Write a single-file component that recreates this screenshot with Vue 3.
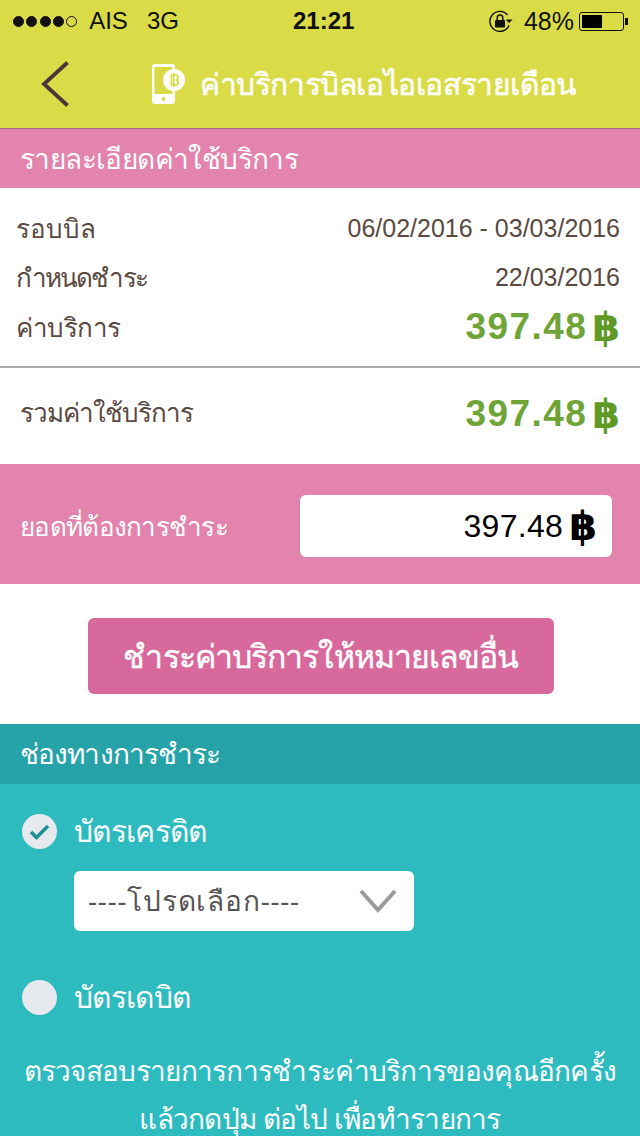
<template>
  <div class="phone">
    <div class="top">
      <div class="status">
        <div class="status-left">
          <span class="dots">
            <i v-for="n in 4" :key="n" class="dot"></i>
            <i class="dot empty"></i>
          </span>
          <span class="carrier">AIS</span>
          <span class="net">3G</span>
        </div>
        <div class="clock">21:21</div>
        <div class="status-right">
          <svg class="lock" width="24" height="22" viewBox="0 0 24 22">
            <path d="M18.6 5A10 10 0 1 0 20 15.5" fill="none" stroke="#111" stroke-width="1.4" />
            <path d="M16.6 9.5h7l-3.5 3.6z" fill="#111" />
            <rect x="6" y="10" width="10" height="7.5" rx="1" fill="#111" />
            <path d="M8.2 10V7.8a2.8 2.8 0 0 1 5.6 0V10" fill="none" stroke="#111" stroke-width="1.5" />
          </svg>
          <span class="pct">48%</span>
          <span class="battery"><i class="level"></i></span>
          <span class="nub"></span>
        </div>
      </div>
      <div class="nav">
        <svg class="back" width="28" height="46" viewBox="0 0 28 46">
          <path d="M26.5 1.5 3 23l23.5 21.5" fill="none" stroke="#4b3636" stroke-width="3.8" />
        </svg>
        <div class="title">
          <svg class="bill-icon" width="33" height="40" viewBox="0 0 33 40">
            <path d="M3 0h17a3 3 0 0 1 3 3v4h-2.4V3H2.4v27h18.2v-4H23v11a3 3 0 0 1-3 3H3a3 3 0 0 1-3-3V3a3 3 0 0 1 3-3z" fill="#fff" />
            <circle cx="11.5" cy="35" r="1.9" fill="#dadc47" />
            <circle cx="22" cy="16" r="11" fill="#fff" />
            <path d="M19.4 11h4.2a2.4 2.4 0 0 1 0 5 2.6 2.6 0 0 1 0 5.200h-4.200zM21.800 9v14" fill="none" stroke="#dadc47" stroke-width="1.7" />
          </svg>
          <span>ค่าบริการบิลเอไอเอสรายเดือน</span>
        </div>
      </div>
    </div>

    <div class="band pink-band">รายละเอียดค่าใช้บริการ</div>

    <div class="details">
      <div class="row row-bill">
        <span>รอบบิล</span>
        <span class="date">06/02/2016 - 03/03/2016</span>
      </div>
      <div class="row row-due">
        <span class="due-label">กำหนดชำระ</span>
        <span class="date">22/03/2016</span>
      </div>
      <div class="row row-fee">
        <span class="fee-label">ค่าบริการ</span>
        <span class="money">397.48 <b class="baht">฿</b></span>
      </div>
    </div>

    <div class="total">
      <span class="total-label">รวมค่าใช้บริการ</span>
      <span class="money">397.48 <b class="baht">฿</b></span>
    </div>

    <div class="amount">
      <span class="amount-label">ยอดที่ต้องการชำระ</span>
      <div class="amount-box">397.48 <b class="baht">฿</b></div>
    </div>

    <div class="action">
      <button class="pay-other">ชำระค่าบริการให้หมายเลขอื่น</button>
    </div>

    <div class="band teal-band">ช่องทางการชำระ</div>

    <div class="channels">
      <div class="option">
        <span class="radio">
          <svg width="21" height="17" viewBox="0 0 21 17">
            <path d="M2 9l5.500 5.500L19 3" fill="none" stroke="#1f9296" stroke-width="3.6" />
          </svg>
        </span>
        <span>บัตรเครดิต</span>
      </div>
      <div class="select">
        <span class="select-text">----โปรดเลือก----</span>
        <svg width="38" height="26" viewBox="0 0 38 26">
          <path d="M2 3l17 19L36 3" fill="none" stroke="#9a9a9a" stroke-width="4" />
        </svg>
      </div>
      <div class="option option-debit">
        <span class="radio"></span>
        <span>บัตรเดบิต</span>
      </div>
      <p class="note">ตรวจสอบรายการการชำระค่าบริการของคุณอีกครั้ง<br />แล้วกดปุ่ม ต่อไป เพื่อทำรายการ</p>
    </div>
  </div>
</template>

<script setup>
</script>

<style>
body {
  margin: 0;
}
</style>

<style scoped>
.phone {
  width: 640px;
  height: 1136px;
  overflow: hidden;
  background: #fff;
  font-family: "Noto Sans", "Liberation Sans", sans-serif;
  color: #5b4a42;
}

.top {
  height: 129px;
  background: #dadc47;
  border-bottom: 1px solid #a5688e;
  box-sizing: border-box;
}

.status {
  height: 40px;
  display: flex;
  align-items: center;
  justify-content: space-between;
  padding: 2px 12px 0 13px;
  box-sizing: border-box;
  position: relative;
  font-family: "Liberation Sans", sans-serif;
  font-size: 24px;
  color: #111;
}

.status-left,
.status-right {
  display: flex;
  align-items: center;
}

.dots {
  display: flex;
  gap: 2.300px;
  margin-right: 12px;
}

.dot {
  width: 11px;
  height: 11px;
  border-radius: 50%;
  background: #111;
  border: 1px solid #111;
  box-sizing: border-box;
}

.dot.empty {
  background: transparent;
}

.net {
  margin-left: 19px;
}

.clock {
  position: absolute;
  left: 293px;
  top: 7px;
  font-weight: 700;
  font-size: 24px;
}

.lock {
  margin-right: 11px;
}

.pct {
  font-size: 25px;
  margin-right: 5px;
}

.battery {
  width: 45px;
  height: 19px;
  border: 1px solid #111;
  border-radius: 3px;
  padding: 2px;
  box-sizing: border-box;
  display: flex;
}

.level {
  width: 20px;
  background: #000;
}

.nub {
  width: 3px;
  height: 7px;
  margin-left: 1px;
  background: #111;
}

.nav {
  height: 88px;
  display: flex;
  align-items: center;
  padding-left: 41px;
  box-sizing: border-box;
}

.back {
  flex: none;
}

.title {
  display: flex;
  align-items: center;
  margin-left: 83px;
  color: #fff;
  font-size: 30px;
  -webkit-text-stroke: 0.5px #fff;
  letter-spacing: -0.4px;
  white-space: nowrap;
}

.bill-icon {
  margin-right: 15px;
}

.band {
  display: flex;
  align-items: center;
  padding-left: 20px;
  color: #fff;
  font-size: 28px;
  box-sizing: border-box;
}

.pink-band {
  background: #e284ad;
  height: 59px;
  letter-spacing: -0.6px;
}

.teal-band {
  background: #26a3a9;
  height: 60px;
  letter-spacing: -0.9px;
}

.details {
  height: 180px;
  padding: 16px 20px 0 16px;
  box-sizing: border-box;
  border-bottom: 2px solid #aaa;
  font-size: 26px;
}

.row {
  display: flex;
  justify-content: space-between;
  align-items: center;
}

.row-bill {
  height: 48px;
}

.row-due {
  height: 50px;
}

.row-fee {
  height: 50px;
}

.due-label {
  letter-spacing: -1.9px;
}

.fee-label {
  letter-spacing: -0.5px;
}

.date {
  font-family: "Liberation Sans", sans-serif;
  font-size: 25px;
}

.money {
  font-family: "Liberation Sans", sans-serif;
  font-weight: 700;
  font-size: 37px;
  letter-spacing: 1.400px;
  color: #6fa436;
  display: flex;
  align-items: center;
  gap: 5px;
}

.baht {
  font-family: "DejaVu Sans", sans-serif;
  color: #5f9a26;
  font-size: 40px;
  line-height: 40px;
  letter-spacing: 0;
}

.total {
  height: 96px;
  padding: 0 20px 4px;
  box-sizing: border-box;
  display: flex;
  justify-content: space-between;
  align-items: center;
  font-size: 26px;
}

.total-label {
  letter-spacing: -1px;
  margin-bottom: 4px;
}

.amount {
  height: 120px;
  background: #e284ad;
  display: flex;
  justify-content: space-between;
  align-items: center;
  padding: 4px 28px 0 20px;
  box-sizing: border-box;
  color: #fff;
  font-size: 26px;
}

.amount-label {
  letter-spacing: -0.7px;
}

.amount-box {
  width: 312px;
  height: 62px;
  background: #fff;
  border-radius: 6px;
  display: flex;
  align-items: center;
  justify-content: flex-end;
  gap: 6px;
  padding-right: 15px;
  box-sizing: border-box;
  font-family: "Liberation Sans", sans-serif;
  font-size: 32px;
  letter-spacing: 0.3px;
  color: #000;
}

.amount-box .baht {
  color: #000;
  font-size: 40px;
}

.action {
  height: 140px;
  display: flex;
  justify-content: center;
  padding: 34px 0 0 2px;
  box-sizing: border-box;
}

.pay-other {
  width: 466px;
  height: 76px;
  border: 0;
  border-radius: 6px;
  background: #d7699c;
  color: #fff;
  font-family: inherit;
  font-size: 32px;
  -webkit-text-stroke: 0.4px #fff;
  letter-spacing: -0.9px;
}

.channels {
  height: 352px;
  background: #2dbbc0;
  padding: 29px 0 0 22px;
  box-sizing: border-box;
  color: #fff;
  font-size: 30px;
}

.option {
  display: flex;
  align-items: center;
  gap: 17px;
  height: 36px;
  letter-spacing: -0.7px;
}

.radio {
  width: 35px;
  height: 35px;
  border-radius: 50%;
  background: #e6e9ee;
  display: flex;
  align-items: center;
  justify-content: center;
}

.select {
  width: 340px;
  height: 60px;
  margin: 22px 0 0 52px;
  padding: 0 17px 0 14px;
  box-sizing: border-box;
  background: #fff;
  border-radius: 6px;
  display: flex;
  align-items: center;
  justify-content: space-between;
  color: #555;
  font-size: 28px;
}

.select-text {
  letter-spacing: 0.8px;
}

.option-debit {
  margin-top: 48px;
}

.note {
  margin: 31px 0 0 -22px;
  width: 640px;
  text-align: center;
  font-size: 28px;
  line-height: 48px;
  letter-spacing: -0.7px;
}
</style>
